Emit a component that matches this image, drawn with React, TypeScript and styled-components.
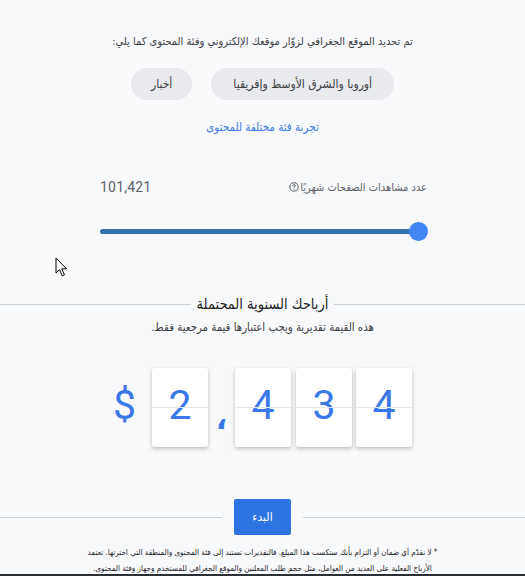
import * as React from "react";
import styled, { createGlobalStyle } from "styled-components";

const GlobalStyle = createGlobalStyle`
  html, body {
    margin: 0;
    padding: 0;
    background: #f8f9fb;
  }
  body {
    font-family: "DejaVu Sans Condensed", "DejaVu Sans", "Noto Sans", sans-serif;
    color: #3c4043;
  }
`;

const Page = styled.main`
  position: relative;
  direction: rtl;
  width: 525px;
  height: 576px;
  overflow: hidden;
  display: flex;
  flex-direction: column;
  align-items: center;
  padding-top: 34px;
  box-sizing: border-box;
`;

const Intro = styled.p`
  margin: 0;
  font-size: 11px;
  line-height: 16px;
  color: #3c4043;
`;

const ChipRow = styled.div`
  display: flex;
  gap: 19px;
  margin-top: 18px;
`;

const Chip = styled.span<{ $pad: number }>`
  display: inline-flex;
  align-items: center;
  height: 32px;
  padding: 0 ${(p) => p.$pad}px;
  border-radius: 16px;
  background: #e8eaed;
  font-size: 12px;
  color: #3c4043;
`;

const TextLink = styled.a`
  margin-top: 20px;
  font-size: 11.5px;
  line-height: 14px;
  color: #3b78e7;
  text-decoration: none;
`;

const Metric = styled.section`
  align-self: stretch;
  padding: 0 98px 0 100px;
  margin-top: 45px;
`;

const MetricHeader = styled.div`
  display: flex;
  justify-content: space-between;
  align-items: center;
  height: 16px;
`;

const MetricLabel = styled.span`
  display: inline-flex;
  align-items: center;
  gap: 1px;
  font-size: 11px;
  color: #5f6368;
`;

const MetricValue = styled.span`
  direction: ltr;
  font-family: Roboto, "Liberation Sans", sans-serif;
  font-size: 14px;
  color: #5f6368;
  letter-spacing: 0.2px;
`;

const Track = styled.div`
  position: relative;
  direction: ltr;
  height: 5px;
  margin-top: 34px;
  border-radius: 3px;
  background: #3572a8;
`;

const Thumb = styled.div`
  position: absolute;
  top: 50%;
  width: 19px;
  height: 19px;
  margin: -9.5px 0 0 -9.5px;
  border-radius: 50%;
  background: #4285f4;
`;

const Divider = styled.div<{ $gap: number; $top: number }>`
  align-self: stretch;
  display: flex;
  align-items: center;
  gap: ${(p) => p.$gap}px;
  margin-top: ${(p) => p.$top}px;

  &::before,
  &::after {
    content: "";
    flex: 1;
    height: 1px;
    background: #cdd0d4;
  }
`;

const Heading = styled.h2`
  margin: 0;
  font-size: 14.5px;
  font-weight: 400;
  line-height: 18px;
  color: #202124;
`;

const Note = styled.p`
  margin: 8px 0 0;
  font-size: 11.3px;
  line-height: 14px;
  color: #3c4043;
`;

const Counter = styled.div`
  direction: ltr;
  display: flex;
  align-items: center;
  margin-top: 33px;
  font-family: Roboto, "Liberation Sans", sans-serif;
  color: #3b78e7;
`;

const Currency = styled.span`
  font-size: 41px;
  line-height: 1;
  margin-right: 16px;
  padding-bottom: 4px;
`;

const DigitCard = styled.span<{ $gap: number }>`
  position: relative;
  display: flex;
  align-items: center;
  justify-content: center;
  width: 56px;
  height: 79px;
  padding-bottom: 4px;
  box-sizing: border-box;
  margin-left: ${(p) => p.$gap}px;
  background: #fff;
  border-radius: 2px;
  box-shadow: 0 2px 4px rgba(0, 0, 0, 0.22), 0 0 1px rgba(0, 0, 0, 0.12);
  font-size: 41px;
  line-height: 1;

  &::after {
    content: "";
    position: absolute;
    left: 0;
    right: 0;
    top: 39px;
    height: 1px;
    background: #e6e7ea;
  }
`;

const Separator = styled.span`
  width: 27px;
  text-align: center;
  font-family: "DejaVu Sans", sans-serif;
  font-size: 30px;
  font-weight: 700;
  line-height: 1;
  margin-top: 22px;
`;

const StartButton = styled.button`
  width: 57px;
  height: 36px;
  border: 0;
  border-radius: 2px;
  background: #2d74e2;
  color: #fff;
  font-family: inherit;
  font-size: 12px;
  cursor: pointer;
`;

const Disclaimer = styled.p`
  margin: 10px 0 0;
  font-size: 8px;
  line-height: 16px;
  text-align: center;
  color: #202124;
`;

const DisclaimerLine = styled.span`
  display: block;
  white-space: nowrap;
`;

const BottomBar = styled.div`
  position: absolute;
  left: 0;
  right: 0;
  bottom: 0;
  height: 2px;
  background: #2a3035;
`;

const Pointer = styled.svg`
  position: absolute;
  left: 55px;
  top: 257px;
`;

const HelpIcon = () => (
  <svg width="10" height="10" viewBox="0 0 10 10">
    <circle cx="5" cy="5" r="4.2" fill="none" stroke="#5f6368" strokeWidth="1.1" />
    <path d="M3.6 4 Q3.6 2.7 5 2.7 Q6.4 2.7 6.4 3.9 Q6.4 4.7 5 5.2 L5 6" fill="none" stroke="#5f6368" strokeWidth="1" />
    <circle cx="5" cy="7.3" r="0.6" fill="#5f6368" />
  </svg>
);

const digits = [
  { d: "4", gap: 0 },
  { d: "3", gap: 5 },
  { d: "4", gap: 4 },
];

const App: React.FC = () => {
  const value = 101421;
  const percent = 97.3;
  return (
    <>
      <GlobalStyle />
      <Page>
        <Intro>تم تحديد الموقع الجغرافي لزوّار موقعك الإلكتروني وفئة المحتوى كما يلي:</Intro>
        <ChipRow>
          <Chip $pad={22}>أوروبا والشرق الأوسط وإفريقيا</Chip>
          <Chip $pad={20}>أخبار</Chip>
        </ChipRow>
        <TextLink href="#">تجربة فئة مختلفة للمحتوى</TextLink>

        <Metric>
          <MetricHeader>
            <MetricLabel>
              عدد مشاهدات الصفحات شهريًا
              <HelpIcon />
            </MetricLabel>
            <MetricValue>{value.toLocaleString("en-US")}</MetricValue>
          </MetricHeader>
          <Track>
            <Thumb style={{ left: `${percent}%` }} />
          </Track>
        </Metric>

        <Divider $gap={6} $top={61}>
          <Heading>أرباحك السنوية المحتملة</Heading>
        </Divider>
        <Note>هذه القيمة تقديرية ويجب اعتبارها قيمة مرجعية فقط.</Note>

        <Counter>
          <Currency>$</Currency>
          <DigitCard $gap={0}>2</DigitCard>
          <Separator>،</Separator>
          {digits.map((item, i) => (
            <DigitCard key={i} $gap={item.gap}>
              {item.d}
            </DigitCard>
          ))}
        </Counter>

        <Divider $gap={12} $top={52}>
          <StartButton>البدء</StartButton>
        </Divider>
        <Disclaimer>
          <DisclaimerLine>
            * لا نقدّم أي ضمان أو التزام بأنك ستكسب هذا المبلغ. فالتقديرات تستند إلى فئة المحتوى والمنطقة التي اخترتها. تعتمد
          </DisclaimerLine>
          <DisclaimerLine>
            الأرباح الفعلية على العديد من العوامل، مثل حجم طلب المعلنين والموقع الجغرافي للمستخدم وجهاز وفئة المحتوى.
          </DisclaimerLine>
        </Disclaimer>

        <Pointer width="14" height="21" viewBox="0 0 14 21">
          <path
            d="M1 1 L1 16 L4.5 12.6 L7.2 18.8 L9.4 17.8 L6.8 11.8 L11.6 11.8 Z"
            fill="#fff"
            stroke="#000"
            strokeWidth="1"
            strokeLinejoin="round"
          />
        </Pointer>
        <BottomBar />
      </Page>
    </>
  );
};

export default App;
